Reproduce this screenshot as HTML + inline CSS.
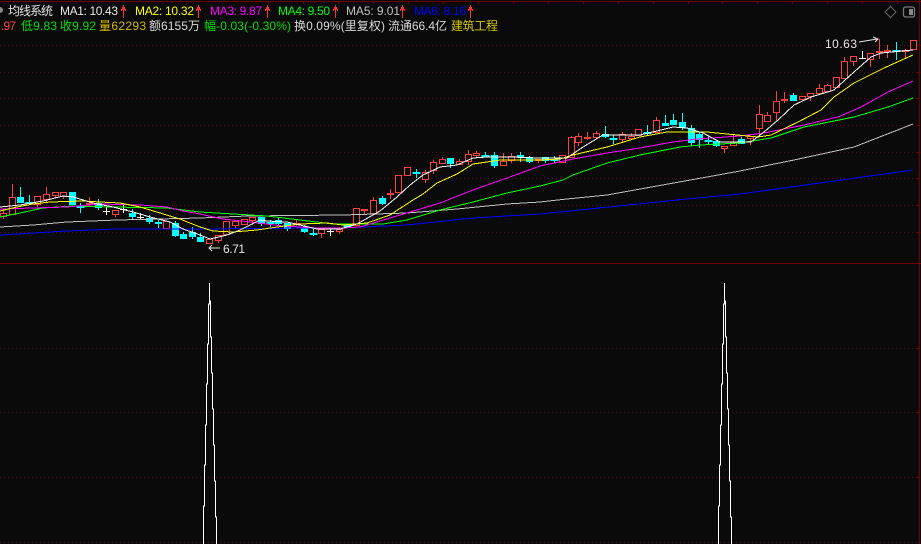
<!DOCTYPE html>
<html><head><meta charset="utf-8"><style>
html,body{margin:0;padding:0;background:#0a0a0a;width:921px;height:544px;overflow:hidden}
svg{display:block}
text{font-family:"Liberation Sans","Noto Sans CJK SC",sans-serif;font-size:12px}
</style></head><body>
<svg width="921" height="544" viewBox="0 0 921 544" xmlns="http://www.w3.org/2000/svg">
<rect width="921" height="544" fill="#0a0a0a"/>
<g fill="none" shape-rendering="crispEdges">
<path d="M0 45.5H919M0 72.5H919M0 98.5H919M0 125.5H919M0 152.5H919M0 178.5H919M0 205.5H919M0 232.5H919M0 348.5H919M0 412.5H919M0 477.5H919M0 542.5H919" stroke="#4e1010" stroke-dasharray="1 3"/>
<path d="M0 1.5H921M0 263.5H921M919.5 0V544" stroke="#700000"/>
<path d="M268.5 1v3M303.5 1v3M338.5 1v3M373.5 1v3M408.5 1v3M443.5 1v3M478.5 1v3M513.5 1v3M548.5 1v3M583.5 1v3M618.5 1v3M653.5 1v3M688.5 1v3M722.5 1v3M757.5 1v3M792.5 1v3M827.5 1v3M862.5 1v3M897.5 1v3M916 45.5h3M916 72.5h3M916 98.5h3M916 125.5h3M916 152.5h3M916 178.5h3M916 205.5h3M916 232.5h3M916 348.5h3M916 412.5h3M916 477.5h3" stroke="#700000"/>
<!-- red candles -->
<path stroke="#ff4040" d="M0.5 213.5h6v3h-6zM3.5 210v3M3.5 217v2M9.5 197.5h6v17h-6zM12.5 184v13M34.5 196.5h6v8h-6zM37.5 205v2M43.5 194.5h6v5h-6zM46.5 187v7M46.5 200v3M52.5 192.5h6v3h-6zM55.5 196v2M60.5 192.5h6v4h-6zM63.5 197v2M86 203.5h7M86 204.5h7M89.5 197v10M112.5 210.5h6v4h-6zM115.5 215v2M163.5 221.5h6v7h-6zM206.5 239.5h6v4h-6zM215.5 235.5h6v5h-6zM218.5 241v2M223.5 221.5h6v13h-6zM232.5 221.5h6v4h-6zM235.5 226v2M241.5 219.5h6v5h-6zM249.5 217.5h6v3h-6zM252.5 221v4M293 223.5h7M293 224.5h7M296.5 220v6M318.5 229.5h6v4h-6zM321.5 234v4M336.5 229.5h6v2h-6zM339.5 227v2M339.5 232v2M353.5 208.5h6v17h-6zM361 209.5h7M361 210.5h7M364.5 209v6M370.5 200.5h6v13h-6zM373.5 197v3M387 193.5h7M387 194.5h7M390.5 189v10M395.5 175.5h6v17h-6zM404.5 167.5h6v8h-6zM422.5 172.5h6v7h-6zM425.5 170v2M425.5 180v3M430.5 162.5h6v8h-6zM433.5 160v2M433.5 171v3M439.5 159.5h6v4h-6zM442.5 157v2M456.5 161.5h6v3h-6zM459.5 159v2M465.5 154.5h6v7h-6zM468.5 150v4M468.5 162v3M473.5 153.5h6v2h-6zM476.5 151v2M476.5 156v2M500.5 161.5h6v4h-6zM503.5 153v8M508.5 156.5h6v4h-6zM511.5 153v3M511.5 161v2M535.5 159.5h6v1h-6zM538.5 161v2M559.5 155.5h6v7h-6zM568.5 137.5h6v20h-6zM571.5 136v1M575.5 136.5h6v6h-6zM578.5 133v3M578.5 143v3M584 137.5h7M584 138.5h7M587.5 132v8M593.5 133.5h6v4h-6zM596.5 131v2M596.5 138v1M619.5 134.5h6v5h-6zM622.5 132v2M622.5 140v3M628.5 136.5h6v2h-6zM631.5 133v3M631.5 139v1M635.5 129.5h6v6h-6zM653.5 120.5h6v12h-6zM656.5 117v3M721.5 146.5h6v2h-6zM724.5 149v4M730.5 142.5h6v3h-6zM733.5 134v8M747.5 136.5h6v2h-6zM750.5 139v6M756.5 114.5h6v14h-6zM759.5 105v9M759.5 129v6M764.5 115.5h6v6h-6zM767.5 112v3M773.5 101.5h6v11h-6zM776.5 91v10M776.5 113v8M781 99.5h7M781 100.5h7M784.5 92v11M799.5 96.5h6v3h-6zM802.5 100v1M807.5 93.5h6v3h-6zM810.5 97v4M816.5 88.5h6v5h-6zM819.5 84v4M819.5 94v1M824.5 85.5h6v6h-6zM827.5 84v1M833.5 77.5h6v10h-6zM841.5 61.5h6v17h-6zM844.5 57v4M850.5 56.5h6v5h-6zM853.5 62v4M867.5 53.5h6v6h-6zM870.5 60v7M876 51.5h7M876 52.5h7M879.5 39v20M884 50.5h7M884 51.5h7M887.5 45v13M902 50.5h7M902 51.5h7M905.5 49v10M910.5 40.5h6v9h-6z"/>
<!-- cyan candles -->
<path stroke="#00ffff" fill="#00ffff" d="M17.5 197.5h6v5h-6zM20.5 187v16M26 202.5h7v1h-7zM29.5 195v9M69.5 192.5h6v12h-6zM77 206.5h7v1h-7zM80.5 203v10M95.5 203.5h6v4h-6zM98.5 199v11M129.5 213.5h6v3h-6zM132.5 209v10M146.5 218.5h6v3h-6zM149.5 215v9M155.5 222.5h6v1h-6zM158.5 220v8M172.5 223.5h6v12h-6zM175.5 221v16M180.5 234.5h6v4h-6zM183.5 232v7M189.5 232.5h6v4h-6zM192.5 227v12M197.5 237.5h6v4h-6zM200.5 233v9M258.5 217.5h6v6h-6zM261.5 217v9M267 222.5h7v1h-7zM270.5 220v7M275.5 220.5h6v3h-6zM278.5 218v7M284.5 223.5h6v5h-6zM287.5 223v8M301.5 227.5h6v4h-6zM304.5 225v8M310 233.5h7v1h-7zM313.5 229v7M344 225.5h7v1h-7zM347.5 224v4M379.5 198.5h6v5h-6zM382.5 196v9M413 172.5h7v1h-7zM416.5 169v9M447.5 158.5h6v5h-6zM450.5 158v10M482 155.5h7v1h-7zM485.5 152v5M491.5 155.5h6v10h-6zM494.5 152v16M517.5 155.5h6v1h-6zM520.5 152v10M526.5 157.5h6v4h-6zM529.5 156v7M542.5 157.5h6v3h-6zM545.5 157v6M551 159.5h7v1h-7zM554.5 156v7M602.5 134.5h6v2h-6zM605.5 126v12M610 138.5h7v1h-7zM613.5 135v9M644 132.5h7v1h-7zM647.5 125v10M662.5 123.5h6v2h-6zM665.5 115v11M670.5 120.5h6v4h-6zM673.5 114v11M679.5 122.5h6v5h-6zM682.5 113v17M688.5 128.5h6v14h-6zM691.5 125v21M696.5 134.5h6v5h-6zM699.5 132v16M705 140.5h7v1h-7zM708.5 136v8M713.5 141.5h6v4h-6zM716.5 141v6M738.5 139.5h6v4h-6zM741.5 137v7M790.5 95.5h6v5h-6zM793.5 93v8M893 50.5h7v1h-7zM896.5 42v18"/>
<!-- white crosses -->
<path stroke="#ffffff" d="M103 211.5h7M106.5 207v8M120 209.5h7M123.5 204v9M137 217.5h7M140.5 213v7M327 231.5h7M330.5 228v8M859 58.5h7M862.5 51v8"/>
</g>
<!-- moving averages -->
<g fill="none" stroke-width="1" shape-rendering="crispEdges">
<polyline stroke="#0000ff" points="0,235 33,233 67,231 117,229 200,229 313,228 340,228 407,225 473,218 540,214 687,199 740,194 820,183 913,170"/>
<polyline stroke="#c0c0c0" points="0,227 33,225 67,222 117,220 200,218 247,216 343,215 407,213 457,209 507,204 540,202 567,199 607,195 657,186 707,177 740,171 794,160 854,147 913,124"/>
<polyline stroke="#00ff00" points="0,217 20,213 43,208 73,206 113,207 167,208 200,212 233,214 267,216 300,220 333,224 357,224 383,224 407,220 440,210 473,202 507,193 540,186 563,180 573,175 607,163 640,155 680,147 700,145 740,143 771,138 804,127 854,117 888,107 913,98"/>
<polyline stroke="#ff00ff" points="0,209 33,208 67,207 100,204 140,205 167,207 183,211 200,214 223,219 250,222 283,226 317,228 343,228 360,227 373,223 407,213 440,203 473,190 507,178 540,166 573,159 607,153 640,148 673,142 697,139 740,136 764,133 804,125 838,117 861,107 888,92 913,81"/>
<polyline stroke="#ffff00" points="0,211 17,207 33,204 50,202 83,201 100,202 120,203 140,207 160,213 180,219 200,227 213,231 233,232 257,230 277,227 300,224 327,223 343,225 367,223 390,215 413,200 423,194 437,183 457,174 473,164 487,162 500,160 540,160 560,159 573,155 607,147 640,137 667,132 707,132 727,134 758,137 771,135 798,122 821,110 834,97 854,83 884,68 913,55"/>
<polyline stroke="#ffffff" points="0,207 20,205 43,201 63,196 73,197 93,203 113,207 133,212 150,217 170,222 183,229 200,235 210,239 227,235 240,230 260,220 267,221 287,222 317,229 340,229 357,224 380,211 397,197 410,185 423,175 440,167 457,165 473,158 487,157 510,157 540,158 567,158 583,147 603,135 640,135 657,131 673,127 687,128 703,133 720,142 751,142 764,132 778,120 794,105 811,97 834,90 854,72 871,57 881,53 913,50"/>
</g>
<!-- lower spikes -->
<g fill="none" stroke="#ffffff" shape-rendering="crispEdges">
<path d="M209.5 283V304H208.5V344H207.5V384H206.5V425H205.5V465H204.5V506H203.5V544M209.5 283V301H210.5V337H211.5V373H212.5V409H213.5V445H214.5V481H215.5V517H216.5V544"/>
<path d="M724.5 283V304H723.5V344H722.5V384H721.5V425H720.5V465H719.5V506H718.5V544M724.5 283V301H725.5V337H726.5V373H727.5V409H728.5V445H729.5V481H730.5V517H731.5V544"/>
</g>
<!-- header row 1 -->
<circle cx="0" cy="10" r="3" fill="#888"/>
<text x="8" y="15" textLength="45" fill="#e6e6e6">均线系统</text>
<text x="60" y="15" textLength="58" fill="#e6e6e6">MA1: 10.43</text>
<text x="135" y="15" textLength="59" fill="#ffff00">MA2: 10.32</text>
<text x="210" y="15" textLength="52" fill="#ff00ff">MA3: 9.87</text>
<text x="278" y="15" textLength="52" fill="#00ff00">MA4: 9.50</text>
<text x="346" y="15" textLength="54" fill="#c0c0c0">MA5: 9.01</text>
<text x="414" y="15" textLength="52" fill="#0000ff">MA6: 8.16</text>
<g fill="none" stroke="#ff3030" shape-rendering="crispEdges">
<path d="M123.5 5V18M122.5 7v3M124.5 7v3M121.5 9v2M125.5 9v2"/>
<path d="M198.5 5V18M197.5 7v3M199.5 7v3M196.5 9v2M200.5 9v2"/>
<path d="M267.5 5V18M266.5 7v3M268.5 7v3M265.5 9v2M269.5 9v2"/>
<path d="M335.5 5V18M334.5 7v3M336.5 7v3M333.5 9v2M337.5 9v2"/>
<path d="M402.5 5V18M401.5 7v3M403.5 7v3M400.5 9v2M404.5 9v2"/>
<path d="M470.5 5V18M469.5 7v3M471.5 7v3M468.5 9v2M472.5 9v2"/>
</g>
<!-- header row 2 -->
<text x="1" y="30" textLength="15" fill="#ff4040">.97</text>
<text x="21" y="30" textLength="36" fill="#00e000">低9.83</text>
<text x="60" y="30" textLength="36" fill="#00e000">收9.92</text>
<text x="99" y="30" textLength="47" fill="#d4b800">量62293</text>
<text x="149" y="30" textLength="51" fill="#d8d8d8">额6155万</text>
<text x="204" y="30" textLength="87" fill="#00e000">幅-0.03(-0.30%)</text>
<text x="294" y="30" textLength="91" fill="#d8d8d8">换0.09%(里复权)</text>
<text x="388" y="30" textLength="59" fill="#d8d8d8">流通66.4亿</text>
<text x="451" y="30" textLength="47" fill="#d8c800">建筑工程</text>
<!-- annotations -->
<text x="825" y="48" textLength="32" fill="#e6e6e6">10.63</text>
<path d="M859 42L877 39M873 37L878 39L875 42" fill="none" stroke="#e6e6e6"/>
<text x="223" y="253" textLength="22" fill="#e6e6e6">6.71</text>
<path d="M209 248H220M212 245L209 248L212 251" fill="none" stroke="#e6e6e6"/>
<!-- top right icons -->
<path d="M890.5 6.5L896 12L890.5 17.5L885 12Z" fill="none" stroke="#666"/>
<rect x="903.5" y="7" width="11" height="10" rx="2" fill="none" stroke="#777" stroke-width="1.3"/>
<rect x="909" y="9" width="4" height="6" fill="#888"/>
</svg>
</body></html>
